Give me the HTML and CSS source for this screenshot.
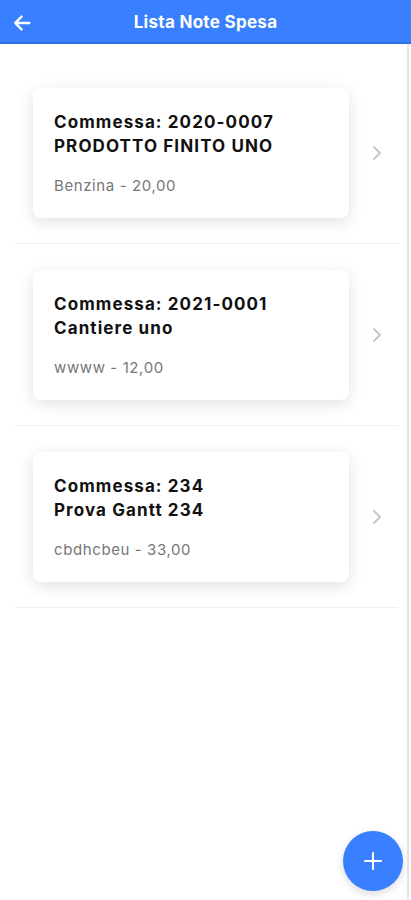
FILE: index.html
```html
<!DOCTYPE html>
<html lang="it">
<head>
  <meta charset="UTF-8">
  <title>Lista Note Spesa</title>
  <meta name="viewport" content="width=device-width, initial-scale=1.0">
  <link rel="stylesheet" href="styles.css">
</head>
<body>
  <!-- barra superiore -->
  <header class="toolbar">
    <button class="back-btn" aria-label="Indietro">
      <svg width="22" height="22" viewBox="0 0 24 24"><path d="M20 12H5M11.5 5L4.5 12l7 7" fill="none" stroke="#fff" stroke-width="2.6" stroke-linecap="round" stroke-linejoin="round"/></svg>
    </button>
    <h1 class="toolbar-title">Lista Note Spesa</h1>
  </header>

  <!-- elenco note spesa -->
  <main class="content">
    <ul class="note-list">
      <li class="note-item">
        <div class="note-card">
          <div class="note-title">Commessa: 2020-0007<br>PRODOTTO FINITO UNO</div>
          <div class="note-sub">Benzina - 20,00</div>
        </div>
        <span class="chevron"><svg width="10" height="16" viewBox="0 0 10 16"><path d="M2 2l6 6-6 6" fill="none" stroke="#c4c4c4" stroke-width="1.8" stroke-linecap="round" stroke-linejoin="round"/></svg></span>
      </li>
      <li class="note-item">
        <div class="note-card">
          <div class="note-title">Commessa: 2021-0001<br>Cantiere uno</div>
          <div class="note-sub">wwww - 12,00</div>
        </div>
        <span class="chevron"><svg width="10" height="16" viewBox="0 0 10 16"><path d="M2 2l6 6-6 6" fill="none" stroke="#c4c4c4" stroke-width="1.8" stroke-linecap="round" stroke-linejoin="round"/></svg></span>
      </li>
      <li class="note-item">
        <div class="note-card">
          <div class="note-title">Commessa: 234<br>Prova Gantt 234</div>
          <div class="note-sub">cbdhcbeu - 33,00</div>
        </div>
        <span class="chevron"><svg width="10" height="16" viewBox="0 0 10 16"><path d="M2 2l6 6-6 6" fill="none" stroke="#c4c4c4" stroke-width="1.8" stroke-linecap="round" stroke-linejoin="round"/></svg></span>
      </li>
    </ul>
  </main>

  <button class="fab" aria-label="Aggiungi">
    <svg width="22" height="22" viewBox="0 0 22 22"><path d="M11 3v16M3 11h16" stroke="#fff" stroke-width="2" stroke-linecap="round"/></svg>
  </button>
</body>
</html>
```

FILE: styles.css
```css
body { margin: 0; background: #fff; font-family: Inter, "Liberation Sans", Arial, sans-serif; height: 900px; overflow: hidden; }
.toolbar { height: 44px; box-sizing: border-box; padding-top: 2px; background: #3880ff; border-bottom: 2px solid #2f72e6; display: flex; align-items: center; justify-content: center; position: relative; }
.back-btn { position: absolute; left: 10px; top: 11px; background: none; border: none; padding: 0; width: 24px; height: 24px; display: flex; align-items: center; justify-content: center; }
.toolbar-title { margin: 0; color: #fff; font-size: 17px; font-weight: 700; letter-spacing: 0.3px; }
.content { height: 856px; border-right: 2px solid #e6e6e6; width: 409px; box-sizing: border-box; }
.note-list { list-style: none; margin: 0; padding: 18px 9px 0 15px; }
.note-item { display: flex; align-items: center; padding: 26px 0 25px 18px; border-bottom: 1px solid #efefef; }
.note-card { flex: 1; height: 130px; box-sizing: border-box; padding: 22px 21px; background: #fff; border-radius: 8px; box-shadow: 0 4px 16px rgba(0,0,0,0.12); }
.note-title { font-size: 17px; font-weight: 700; line-height: 24px; color: #111; letter-spacing: 1.1px; }
.note-sub { margin-top: 18px; font-size: 15px; line-height: 20px; color: #777; letter-spacing: 0.6px; }
.chevron { width: 49px; display: flex; justify-content: center; padding-left: 6px; box-sizing: border-box; }
.fab { position: absolute; left: 343px; top: 831px; width: 60px; height: 60px; border-radius: 50%; border: none; background: #3880ff; display: flex; align-items: center; justify-content: center; box-shadow: 0 3px 8px rgba(0,0,0,0.15); padding: 0; }
```
